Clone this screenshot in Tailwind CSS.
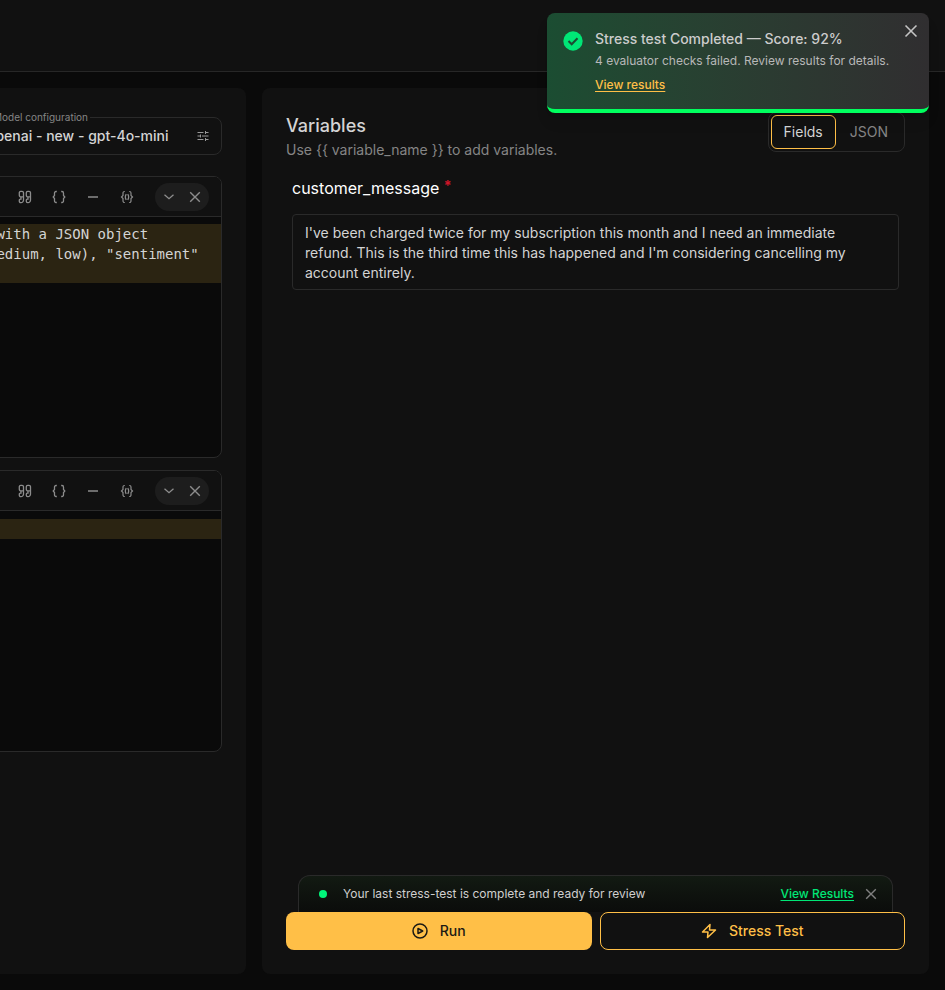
<!DOCTYPE html>
<html lang="en">
<head>
  <meta charset="UTF-8" />
  <meta name="viewport" content="width=device-width, initial-scale=1.0"/>
  <title>Prompt Playground</title>
  <script src="https://cdn.jsdelivr.net/npm/@tailwindcss/browser@4"></script>
</head>
<body class="relative flex h-screen flex-col overflow-hidden bg-[#0a0a0a] font-['Inter',sans-serif] text-[#d4d4d4]">

  <!-- Icons shared by both editors -->
  <svg class="hidden">
    <symbol id="quote" viewBox="0 0 14 14" fill="none" stroke="currentColor" stroke-width="1.3">
      <path d="M5.500 6.800H3A1.500 1.500 0 0 1 1.300 5.300V2.800A1.500 1.500 0 0 1 2.800 1.300H4A1.500 1.500 0 0 1 5.500 2.800V10A2.500 2.500 0 0 1 3 12.600H2.600A1.300 1.300 0 0 1 1.300 11.300V10.200A1 1 0 0 1 2.300 9.200H3V6.800M12.500 6.800H10A1.500 1.500 0 0 1 8.300 5.300V2.800A1.500 1.500 0 0 1 9.800 1.300H11A1.500 1.500 0 0 1 12.500 2.800V10A2.500 2.500 0 0 1 10 12.600H9.600A1.300 1.300 0 0 1 8.300 11.300V10.200A1 1 0 0 1 9.300 9.200H10V6.800"/>
    </symbol>
    <symbol id="braces" viewBox="0 0 14 14" fill="none" stroke="currentColor" stroke-width="1.3">
      <path d="M4.800 1.500H4A1.500 1.500 0 0 0 2.500 3V5.500L1.200 7L2.500 8.500V11A1.500 1.500 0 0 0 4 12.500H4.800M9.200 1.500H10A1.500 1.500 0 0 1 11.500 3V5.500L12.800 7L11.500 8.500V11A1.500 1.500 0 0 1 10 12.500H9.200"/>
    </symbol>
    <symbol id="minus" viewBox="0 0 14 14" fill="none" stroke="currentColor">
      <path stroke-width="1.500" d="M2 7h10"/>
    </symbol>
    <symbol id="variable" viewBox="0 0 14 14" fill="none" stroke="currentColor" stroke-width="1.2">
      <path d="M4.800 1.500H4.500A1.500 1.500 0 0 0 3 3V5.500L1.500 7L3 8.500V11A1.500 1.500 0 0 0 4.500 12.500H4.800M9.200 1.500H9.500A1.500 1.500 0 0 1 11 3V5.500L12.500 7L11 8.500V11A1.500 1.500 0 0 1 9.500 12.500H9.200M6.200 4Q4.400 7 6.200 10M7.800 4Q9.600 7 7.800 10"/>
    </symbol>
    <symbol id="chevron" viewBox="0 0 14 14" fill="none" stroke="currentColor">
      <path stroke-width="1.300" d="M2.500 4.700 7 8.700l4.500-4"/>
    </symbol>
    <symbol id="close" viewBox="0 0 14 14" fill="none" stroke="currentColor">
      <path stroke-width="1.400" d="m2.200 2.200 9.600 9.600M11.800 2.200l-9.600 9.600"/>
    </symbol>
  </svg>

  <header class="h-18 shrink-0 border-b border-[#272727] bg-[#111111]"></header>

  <main class="flex min-h-0 flex-1 gap-4 py-4 pr-4">

    <!-- Prompt editors -->
    <section class="w-[246px] shrink-0 overflow-hidden rounded-r-lg bg-[#111111] pr-6">
      <div class="-ml-6 pt-6">
        <fieldset class="flex h-[43px] items-center justify-between rounded-lg border border-[#2a2a2a] pr-3 pl-2.5 whitespace-nowrap">
          <legend class="pr-0.5 pl-1.5 text-[10px] leading-[10px] text-[#858585]">Model configuration</legend>
          <span class="mb-1 text-sm font-medium">openai - new - gpt-4o-mini</span>
          <button aria-label="Model settings" class="mb-1 text-[#999999]">
            <svg class="size-3" viewBox="0 0 12 12" fill="none" stroke="currentColor"><path d="M0.500 2.500h6M9 2.500h2.500M8.500 1v3M0.500 6H3M5 6h6.500M3.500 4.500v3M0.500 9.500h6M9 9.500h2.500M8.500 8v3"/></svg>
          </button>
        </fieldset>

        <div class="mt-[21px] h-[282px] overflow-hidden rounded-lg border border-[#2a2a2a] bg-[#0a0a0a]">
          <div class="flex h-10 items-center border-b border-[#2a2a2a] bg-[#111111] pr-3 text-[#8c8c8c]">
            <div class="mr-[21px] ml-auto flex gap-5">
              <button aria-label="Quote"><svg class="size-3.5"><use href="#quote"/></svg></button>
              <button aria-label="Code"><svg class="size-3.5"><use href="#braces"/></svg></button>
              <button aria-label="Divider"><svg class="size-3.5"><use href="#minus"/></svg></button>
              <button aria-label="Variable"><svg class="size-3.5"><use href="#variable"/></svg></button>
            </div>
            <div class="flex h-7 items-center gap-3 rounded-full bg-[#1d1d1d] px-[7px]">
              <button aria-label="Collapse"><svg class="size-3.5"><use href="#chevron"/></svg></button>
              <button aria-label="Remove"><svg class="size-3.5"><use href="#close"/></svg></button>
            </div>
          </div>
          <pre class="mt-2 h-[59px] bg-[#2b2412] pl-[11px] font-['DejaVu_Sans_Mono',monospace] text-sm leading-5"><code class="block -mt-px font-['DejaVu_Sans_Mono',monospace] text-sm leading-5"> with a JSON object
medium, low), "sentiment"</code></pre>
        </div>

        <div class="mt-3 h-[282px] overflow-hidden rounded-lg border border-[#2a2a2a] bg-[#0a0a0a]">
          <div class="flex h-10 items-center border-b border-[#2a2a2a] bg-[#111111] pr-3 text-[#8c8c8c]">
            <div class="mr-[21px] ml-auto flex gap-5">
              <button aria-label="Quote"><svg class="size-3.5"><use href="#quote"/></svg></button>
              <button aria-label="Code"><svg class="size-3.5"><use href="#braces"/></svg></button>
              <button aria-label="Divider"><svg class="size-3.5"><use href="#minus"/></svg></button>
              <button aria-label="Variable"><svg class="size-3.5"><use href="#variable"/></svg></button>
            </div>
            <div class="flex h-7 items-center gap-3 rounded-full bg-[#1d1d1d] px-[7px]">
              <button aria-label="Collapse"><svg class="size-3.5"><use href="#chevron"/></svg></button>
              <button aria-label="Remove"><svg class="size-3.5"><use href="#close"/></svg></button>
            </div>
          </div>
          <div class="mt-2 h-5 bg-[#2b2412]"></div>
        </div>
      </div>
    </section>

    <!-- Variables -->
    <section class="flex min-w-0 flex-1 flex-col rounded-lg bg-[#111111] p-6">
      <div class="flex items-start justify-between">
        <div>
          <h2 class="text-lg leading-7 font-medium">Variables</h2>
          <p class="text-sm leading-5 text-[#858585]">Use {{ variable_name }} to add variables.</p>
        </div>
        <div class="flex h-10 rounded-lg border border-[#2a2a2a] p-0.5 text-sm">
          <button class="h-[34px] rounded-md border border-[#ffbf47] px-3">Fields</button>
          <button class="h-[34px] px-3.5 text-[#858585]">JSON</button>
        </div>
      </div>

      <div class="mt-4 px-1.5">
        <label for="customer_message" class="block text-base leading-6 text-white">customer_message <span class="align-top text-sm leading-5 font-bold text-[#d01528]">*</span></label>
        <textarea id="customer_message" class="mt-3.5 block h-[76px] w-full resize-none overflow-hidden rounded-sm border border-[#2a2a2a] bg-transparent px-3 py-2 text-sm leading-5 outline-none">I've been charged twice for my subscription this month and I need an immediate refund. This is the third time this has happened and I'm considering cancelling my account entirely.</textarea>
      </div>

      <div class="mt-auto">
        <div class="mx-3 flex h-[37px] items-center rounded-t-xl border border-b-0 border-[#2a2a2a] bg-linear-to-b from-[#121a12] to-[#0b0c0b] pr-3.5 pl-5 text-xs">
          <span class="size-2 rounded-full bg-[#00f57a]"></span>
          <span class="ml-4 text-[#cfcfcf]">Your last stress-test is complete and ready for review</span>
          <a href="#" class="ml-auto font-medium text-[#00e676] underline underline-offset-2">View Results</a>
          <button aria-label="Dismiss" class="ml-2.5 text-[#808080]"><svg class="size-3.5"><use href="#close"/></svg></button>
        </div>
        <div class="grid grid-cols-2 gap-2 text-sm font-medium">
          <button class="flex h-[38px] items-center justify-center gap-3 rounded-lg bg-[#ffbf47] text-[#1c1a14]">
            <svg class="size-4" viewBox="0 0 16 16" fill="none" stroke="currentColor" stroke-width="1.500" stroke-linejoin="round"><circle cx="8" cy="8" r="7"/><path d="M6 5.500v5L10.700 8z"/></svg>
            Run
          </button>
          <button class="flex h-[38px] items-center justify-center gap-3 rounded-lg border border-[#ffbf47] text-[#ffbf47]">
            <svg class="size-4" viewBox="0 0 16 16" fill="none" stroke="currentColor" stroke-width="1.500" stroke-linejoin="round"><path d="M9 1.500 1.500 9H7l-.5 5.500L14.500 7H8.500z"/></svg>
            Stress Test
          </button>
        </div>
      </div>
    </section>
  </main>

  <!-- Toast -->
  <div role="status" class="absolute top-[13px] right-4 flex h-[100px] w-[382px] gap-3 rounded-lg border-b-4 border-[#00ff5e] bg-linear-to-r from-[#1b4d32] to-[#302e30] px-4 pt-4 shadow-lg">
    <svg class="mt-0.5 size-5 shrink-0" viewBox="0 0 20 20" fill="none"><circle cx="10" cy="10" r="9.700" fill="#00e676"/><path d="m5.500 10 3.200 3.200 5.800-6" stroke="#1c4a32" stroke-width="2"/></svg>
    <div class="whitespace-nowrap">
      <p class="text-sm leading-5 font-medium text-[#cccccc]">Stress test Completed — Score: 92%</p>
      <p class="mt-0.5 text-xs leading-5 text-[#b8b8b8]">4 evaluator checks failed. Review results for details.</p>
      <a href="#" class="mt-1 block w-fit text-xs leading-5 font-medium text-[#ffbf47] underline underline-offset-2">View results</a>
    </div>
    <button aria-label="Close" class="absolute top-2.5 right-2.5 text-[#c4c4c4]"><svg class="size-4"><use href="#close"/></svg></button>
  </div>

</body>
</html>
